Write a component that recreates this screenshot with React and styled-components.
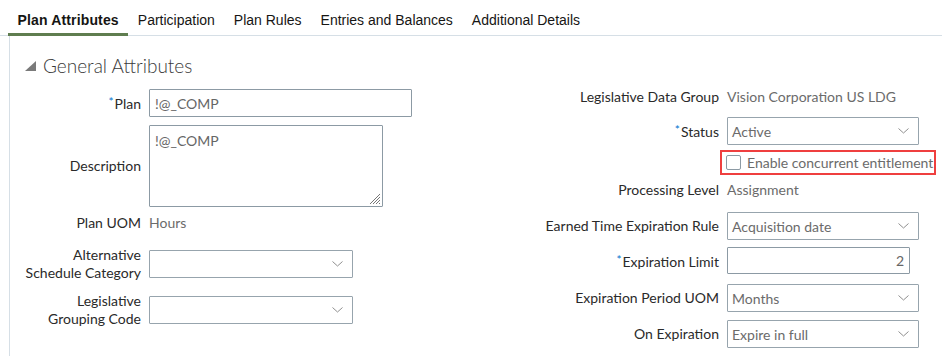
import React from 'react';
import styled, { createGlobalStyle } from 'styled-components';

const GlobalStyle = createGlobalStyle`
  body {
    margin: 0;
    background: #ffffff;
    font-family: Lato, "Noto Sans", sans-serif;
    font-size: 14px;
    color: #333333;
  }
  * { box-sizing: border-box; }
`;

const tabs = ['Plan Attributes', 'Participation', 'Plan Rules', 'Entries and Balances', 'Additional Details'];

const Page = styled.div`
  width: 942px;
  height: 356px;
  overflow: hidden;
`;

const TabBar = styled.div`
  display: flex;
  height: 36px;
  padding-left: 8px;
  border-bottom: 1px solid #d6dfe6;
`;

const Tab = styled.div`
  height: 36px;
  padding: 12px 9.5px 0;
  margin-bottom: -1px;
  font-family: "Liberation Sans", Arial, sans-serif;
  font-size: 14px;
  line-height: 16px;
  color: #161513;
  font-weight: ${(p) => (p.$active ? 700 : 400)};
  letter-spacing: ${(p) => (p.$active ? '0.15px' : '0')};
  border-bottom: 3px solid ${(p) => (p.$active ? '#5f7d4f' : 'transparent')};
  white-space: nowrap;
`;

const Panel = styled.div`
  margin-left: 9px;
  height: 320px;
  border-left: 1px solid #d6dfe6;
`;

const Header = styled.div`
  display: flex;
  align-items: center;
  gap: 7px;
  padding: 18px 0 0 15px;
  height: 41px;
`;

const HeaderTitle = styled.h2`
  margin: 0;
  font-size: 19px;
  line-height: 22px;
  font-weight: 300;
  color: #3a3a3a;
`;

const Form = styled.div`
  display: flex;
`;

const Column = styled.div`
  display: flex;
  flex-direction: column;
  width: ${(p) => p.$width}px;
`;

const Row = styled.div`
  display: grid;
  grid-template-columns: ${(p) => p.$label}px auto;
  column-gap: 8px;
  align-items: center;
  margin-top: ${(p) => p.$top}px;
`;

const Label = styled.label`
  text-align: right;
  line-height: 18px;
  color: #2a2a2a;
`;

const Req = styled.span`
  color: #0572ce;
  font-size: 12px;
  vertical-align: 3px;
  margin-right: 1px;
`;

const Value = styled.div`
  line-height: 18px;
  color: #6b6b6b;
`;

const TextInput = styled.input`
  width: ${(p) => p.$w}px;
  height: ${(p) => p.$h || 28}px;
  border: 1px solid #8c9aa4;
  border-radius: 1px;
  padding: 0 5px;
  font: inherit;
  color: #666666;
  text-align: ${(p) => (p.$right ? 'right' : 'left')};
  outline: none;
  background: #fff;
`;

const AreaWrap = styled.div`
  position: relative;
  width: 234px;
  height: 82px;
`;

const TextArea = styled.textarea`
  width: 100%;
  height: 100%;
  border: 1px solid #8c9aa4;
  border-radius: 1px;
  padding: 6px 5px;
  font: inherit;
  line-height: 17px;
  color: #666666;
  resize: none;
  outline: none;
`;

const Grip = styled.svg`
  position: absolute;
  right: 3px;
  bottom: 3px;
`;

const SelectBox = styled.div`
  display: flex;
  align-items: center;
  justify-content: space-between;
  width: ${(p) => p.$w}px;
  height: ${(p) => p.$h || 28}px;
  border: 1px solid #97a4ad;
  border-radius: 1px;
  padding: 0 9px 0 4px;
  color: #6b6b6b;
  background: #fff;
`;

const CheckFrame = styled.div`
  display: flex;
  align-items: center;
  gap: 6px;
  width: 216px;
  height: 25px;
  margin-left: -7px;
  padding-left: 4px;
  border: 2px solid #ef3f3f;
  white-space: nowrap;
`;

const CheckBox = styled.span`
  flex: none;
  width: 15px;
  height: 15px;
  border: 1px solid #8c9aa4;
  border-radius: 2px;
  background: #fff;
`;

const CheckText = styled.span`
  color: #6b6b6b;
  line-height: 18px;
`;

const Disclosure = () => (
  <svg width="11" height="10" viewBox="0 0 11 10">
    <polygon points="11,0 11,10 0,10" fill="#7a7a7a" />
  </svg>
);

const Chevron = () => (
  <svg width="11" height="6" viewBox="0 0 11 6">
    <polyline points="0.5,0.5 5.5,5 10.5,0.5" fill="none" stroke="#8f8f8f" strokeWidth="1" />
  </svg>
);

const Select = ({ w, value }) => (
  <SelectBox $w={w}>
    <span>{value}</span>
    <Chevron />
  </SelectBox>
);

const FieldLabel = ({ required, children }) => (
  <Label>
    {required && <Req>*</Req>}
    {children}
  </Label>
);

export default function App() {
  return (
    <Page>
      <GlobalStyle />
      <TabBar>
        {tabs.map((t, i) => (
          <Tab key={t} $active={i === 0}>{t}</Tab>
        ))}
      </TabBar>
      <Panel>
        <Header>
          <Disclosure />
          <HeaderTitle>General Attributes</HeaderTitle>
        </Header>
        <Form>
          <Column $width={530}>
            <Row $label={131} $top={12}>
              <FieldLabel required>Plan</FieldLabel>
              <TextInput $w={263} readOnly value="!@_COMP" />
            </Row>
            <Row $label={131} $top={8}>
              <FieldLabel>Description</FieldLabel>
              <AreaWrap>
                <TextArea readOnly value="!@_COMP" />
                <Grip width="11" height="11" viewBox="0 0 11 11">
                  <g stroke="#777" strokeWidth="1">
                    <line x1="11" y1="1" x2="1" y2="11" />
                    <line x1="11" y1="4" x2="4" y2="11" />
                    <line x1="11" y1="7" x2="7" y2="11" />
                    <line x1="11" y1="10" x2="10" y2="11" />
                  </g>
                </Grip>
              </AreaWrap>
            </Row>
            <Row $label={131} $top={7}>
              <FieldLabel>Plan UOM</FieldLabel>
              <Value>Hours</Value>
            </Row>
            <Row $label={131} $top={14}>
              <FieldLabel>Alternative<br />Schedule Category</FieldLabel>
              <Select w={204} value="" />
            </Row>
            <Row $label={131} $top={10}>
              <FieldLabel>Legislative<br />Grouping Code</FieldLabel>
              <Select w={204} value="" />
            </Row>
          </Column>
          <Column $width={402}>
            <Row $label={179} $top={11}>
              <FieldLabel>Legislative Data Group</FieldLabel>
              <Value>Vision Corporation US LDG</Value>
            </Row>
            <Row $label={179} $top={11}>
              <FieldLabel required>Status</FieldLabel>
              <Select w={192} value="Active" />
            </Row>
            <Row $label={179} $top={5}>
              <span />
              <CheckFrame>
                <CheckBox />
                <CheckText>Enable concurrent entitlement</CheckText>
              </CheckFrame>
            </Row>
            <Row $label={179} $top={6}>
              <FieldLabel>Processing Level</FieldLabel>
              <Value>Assignment</Value>
            </Row>
            <Row $label={179} $top={13}>
              <FieldLabel>Earned Time Expiration Rule</FieldLabel>
              <Select w={192} value="Acquisition date" />
            </Row>
            <Row $label={179} $top={7}>
              <FieldLabel required>Expiration Limit</FieldLabel>
              <TextInput $w={183} $h={27} $right readOnly value="2" />
            </Row>
            <Row $label={179} $top={10}>
              <FieldLabel>Expiration Period UOM</FieldLabel>
              <Select w={192} value="Months" />
            </Row>
            <Row $label={179} $top={8}>
              <FieldLabel>On Expiration</FieldLabel>
              <Select w={192} value="Expire in full" />
            </Row>
          </Column>
        </Form>
      </Panel>
    </Page>
  );
}
